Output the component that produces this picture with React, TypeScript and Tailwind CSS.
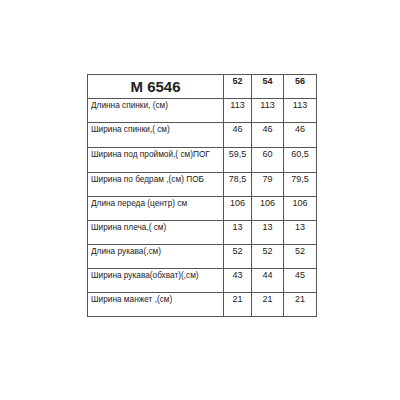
import React from "react";

const rows: { label: string; v: [string, string, string]; h: string }[] = [
  { label: "Длинна спинки, (см)", v: ["113", "113", "113"], h: "h-[24px]" },
  { label: "Ширина спинки,( см)", v: ["46", "46", "46"], h: "h-[25px]" },
  { label: "Ширина под проймой,( см)ПОГ", v: ["59,5", "60", "60,5"], h: "h-[25px]" },
  { label: "Ширина по бедрам ,(см) ПОБ", v: ["78,5", "79", "79,5"], h: "h-[24px]" },
  { label: "Длина переда (центр) см", v: ["106", "106", "106"], h: "h-[24px]" },
  { label: "Ширина плеча,( см)", v: ["13", "13", "13"], h: "h-[24px]" },
  { label: "Длина рукава(,см)", v: ["52", "52", "52"], h: "h-[24px]" },
  { label: "Ширина рукава(обхват)(,см)", v: ["43", "44", "45"], h: "h-[24px]" },
  { label: "Ширина манжет ,(см)", v: ["21", "21", "21"], h: "h-[24px]" },
];

export default function App() {
  return (
    <div className="w-[400px] h-[400px] bg-white pl-[87px] pt-[74px] text-[#222] font-['Liberation_Sans',Arial,sans-serif]">
      <table className="border-collapse table-fixed w-[230px]">
        <colgroup>
          <col className="w-[136px]" />
          <col className="w-[28px]" />
          <col className="w-[32px]" />
          <col className="w-[33px]" />
        </colgroup>
        <tbody>
          <tr className="h-[24px]">
            <td className="border border-[#555] text-center align-middle font-bold text-[15px] leading-[15px] p-0">M 6546</td>
            {["52", "54", "56"].map((s) => (
              <td key={s} className="border border-[#555] text-center align-top font-bold text-[9px] leading-[11px] p-0 pt-[1px]">{s}</td>
            ))}
          </tr>
          {rows.map((r) => (
            <tr key={r.label} className={r.h}>
              <td className="border border-[#555] align-top text-[9.5px] leading-[12px] p-0 pl-[3px] whitespace-nowrap">
                <span className="inline-block origin-left scale-x-[0.87]">{r.label}</span>
              </td>
              {r.v.map((x, i) => (
                <td key={i} className="border border-[#555] align-top text-center text-[9px] leading-[12px] p-0">{x}</td>
              ))}
            </tr>
          ))}
        </tbody>
      </table>
    </div>
  );
}
